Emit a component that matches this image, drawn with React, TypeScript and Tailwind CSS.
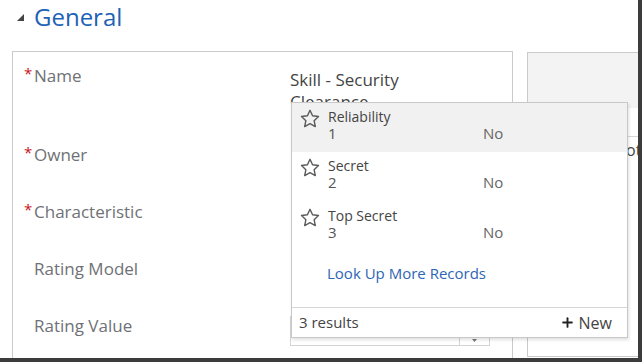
import { Plus } from "lucide-react";

const LABELS = [
  { label: "Name", required: true, h: "h-[79px]" },
  { label: "Owner", required: true, h: "h-[57px]" },
  { label: "Characteristic", required: true, h: "h-[57px]" },
  { label: "Rating Model", required: false, h: "h-[57px]" },
  { label: "Rating Value", required: false, h: "h-[57px]" },
];

const RESULTS = [
  { name: "Reliability", num: "1", active: true },
  { name: "Secret", num: "2", active: false },
  { name: "Top Secret", num: "3", active: false },
];

function StarIcon() {
  return (
    <svg width="20" height="19" viewBox="0 0 24 23" className="shrink-0">
      <path
        d="M12 1.6l3.1 6.6 7.2.9-5.3 5 1.4 7.2L12 17.8l-6.4 3.5 1.4-7.2-5.3-5 7.2-.9z"
        fill="none"
        stroke="#5a5a5a"
        strokeWidth="1.7"
        strokeLinejoin="round"
      />
    </svg>
  );
}

function LookupMenu() {
  return (
    <div className="absolute left-[291px] top-[102px] w-[337px] h-[236px] border border-[#c8c8c8] bg-white shadow-[1px_2px_3px_rgba(0,0,0,0.12)] flex flex-col">
      {RESULTS.map((r) => (
        <div
          key={r.name}
          className={
            r.active
              ? "h-[49px] flex items-start gap-[8px] pl-[8px] pt-[5px] bg-[#f1f1f1]"
              : "h-[50px] flex items-start gap-[8px] pl-[8px] pt-[5px]"
          }
        >
          <div className="pt-[1px]">
            <StarIcon />
          </div>
          <div className="flex flex-col">
            <span className="text-[14px] leading-[17px] text-[#444]">{r.name}</span>
            <div className="flex text-[15px] leading-[17px] text-[#555]">
              <span className="w-[155px]">{r.num}</span>
              <span className="text-[#666]">No</span>
            </div>
          </div>
        </div>
      ))}
      <div className="flex-1 pl-[35px] pt-[11px] text-[15px] leading-[20px] text-[#2d66b4]">
        Look Up More Records
      </div>
      <div className="h-[30px] border-t border-[#d6d6d6] flex items-center justify-between pl-[7px] pr-[15px] text-[15px] text-[#444]">
        <span>3 results</span>
        <span className="flex items-center gap-[4px]">
          <Plus size={15} strokeWidth={3} color="#222" />
          <span className="text-[16px]">New</span>
        </span>
      </div>
    </div>
  );
}

export default function App() {
  return (
    <div className="w-[644px] h-[364px] bg-white overflow-hidden font-['Open_Sans',sans-serif]">
      <div className="relative w-[642px] h-[362px] border-r-4 border-b-4 border-[#3c3c3c] overflow-hidden">
        {/* Section header */}
        <div className="h-[51px] flex items-start pl-[17px] pt-[1px] gap-[10px]">
          <svg width="7" height="7" viewBox="0 0 7 7" className="mt-[13px]">
            <polygon points="7,0 7,7 0,7" fill="#444" />
          </svg>
          <span className="text-[24px] leading-[32px] text-[#1d62b6]">General</span>
        </div>

        <div className="flex gap-[14px] pl-[12px]">
          {/* Left form panel */}
          <div className="w-[501px] h-[320px] shrink-0 border-l border-t border-r border-[#cacaca] pt-[12px]">
            {LABELS.map((l, i) => (
              <div key={l.label} className={`flex ${l.h}`}>
                <div className="w-[277px] shrink-0 flex items-start pl-[11px] text-[17px] leading-[24px] text-[#6f7176]">
                  <span className="w-[10px] text-[#c4161c] text-[15px] leading-[18px]">
                    {l.required ? "*" : ""}
                  </span>
                  <span>{l.label}</span>
                </div>
                {i === 0 && (
                  <div className="w-[180px] pt-[5px] text-[17px] leading-[22px] text-[#444]">
                    Skill - Security Clearance
                  </div>
                )}
                {i === 4 && (
                  <div className="mt-[2px] w-[200px] h-[30px] border border-[#d4d4d4] flex justify-end">
                    <div className="w-[30px] border-l border-[#d4d4d4] flex items-end justify-center pb-[3px]">
                      <svg width="5" height="3" viewBox="0 0 5 3">
                        <polygon points="0,0 5,0 2.5,3" fill="#777" />
                      </svg>
                    </div>
                  </div>
                )}
              </div>
            ))}
          </div>

          {/* Right panel */}
          <div className="w-[140px] h-[305px] shrink-0 mt-[1px] border border-[#cacaca] flex flex-col">
            <div className="h-[55px] bg-[#f3f3f3]" />
            <div className="h-[29px] border-b border-[#d6d6d6]" />
            <div className="pl-[86px] pt-[2px] text-[16px] leading-[22px] text-[#444] whitespace-nowrap">
              Notes
            </div>
          </div>
        </div>

        <LookupMenu />
      </div>
    </div>
  );
}
